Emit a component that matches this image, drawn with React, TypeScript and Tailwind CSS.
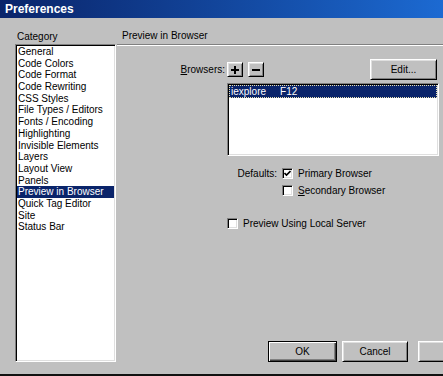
import type { ReactNode } from 'react';

const categories = [
  'General',
  'Code Colors',
  'Code Format',
  'Code Rewriting',
  'CSS Styles',
  'File Types / Editors',
  'Fonts / Encoding',
  'Highlighting',
  'Invisible Elements',
  'Layers',
  'Layout View',
  'Panels',
  'Preview in Browser',
  'Quick Tag Editor',
  'Site',
  'Status Bar',
];

const Checkbox = ({ checked = false }: { checked?: boolean }) => (
  <div className="w-[11px] h-[11px] shrink-0 bg-white border border-t-[#808080] border-l-[#808080] border-r-white border-b-white shadow-[inset_1px_1px_0_#000,inset_-1px_-1px_0_#dfdfdf] flex items-center justify-center">
    {checked && (
      <svg width="7" height="7" viewBox="0 0 7 7">
        <path d="M0.5 3 L2.5 5 L6.5 1" stroke="#000" strokeWidth="1.6" fill="none" />
      </svg>
    )}
  </div>
);

const Button = ({ children, className = '', isDefault = false }: { children?: ReactNode; className?: string; isDefault?: boolean }) => (
  <div
    className={`shrink-0 bg-[#c0c0c0] flex items-center justify-center ${
      isDefault
        ? 'border border-black shadow-[inset_1px_1px_0_#fff,inset_-1px_-1px_0_#404040,inset_-2px_-2px_0_#808080]'
        : 'border border-t-white border-l-white border-r-black border-b-black shadow-[inset_1px_1px_0_#dfdfdf,inset_-1px_-1px_0_#808080]'
    } ${className}`}
  >
    {children}
  </div>
);

export default function App() {
  return (
    <div className="w-[443px] h-[376px] overflow-hidden bg-[#c0c0c0] flex flex-col text-[10px] text-black border-b-2 border-[#111] font-['Liberation_Sans',Arial,sans-serif]">
      {/* title bar */}
      <div className="h-[18px] shrink-0 flex items-center pl-[5px] bg-gradient-to-r from-[#0a246a] to-[#1c6ad2] text-white font-bold text-[12px]">
        Preferences
      </div>

      <div className="flex flex-1 pb-[12px] min-h-0">
        {/* category column */}
        <div className="ml-[15px] w-[101px] flex flex-col">
          <div className="mt-[12px] h-[13px] leading-[13px] pl-[2px]">Category</div>
          <div className="mt-[1px] flex-1 bg-white border border-t-[#808080] border-l-[#808080] border-r-white border-b-white shadow-[inset_1px_1px_0_#000,inset_-1px_-1px_0_#dfdfdf] pt-[1px] px-[1px]">
            {categories.map((c) => (
              <div
                key={c}
                className={`h-[11.7px] leading-[11.7px] pl-[1px] whitespace-nowrap ${
                  c === 'Preview in Browser' ? 'bg-[#0a246a] text-white' : ''
                }`}
              >
                {c}
              </div>
            ))}
          </div>
        </div>

        {/* settings panel */}
        <div className="ml-[1px] flex-1 flex flex-col min-w-0">
          <div className="h-[27px] shrink-0 flex items-end pb-[2px] pl-[5px] border-b border-[#808080] leading-[13px]">
            Preview in Browser
          </div>
          <div className="h-px bg-white shrink-0" />

          <div className="mt-[13px] h-[21px] flex items-center">
            <div className="w-[108px] text-right">
              <span className="underline">B</span>rowsers:
            </div>
            <Button className="ml-[2px] w-[16px] h-[15px]">
              <svg width="8" height="8" viewBox="0 0 8 8">
                <path d="M4 0 V8 M0 4 H8" stroke="#000" strokeWidth="2" />
              </svg>
            </Button>
            <Button className="ml-[5px] w-[16px] h-[15px]">
              <svg width="8" height="8" viewBox="0 0 8 8">
                <path d="M0 4 H8" stroke="#000" strokeWidth="2" />
              </svg>
            </Button>
            <Button className="ml-auto mr-[6px] w-[67px] h-[21px]">Edit...</Button>
          </div>

          <div className="mt-[3px] ml-[110px] w-[212px] h-[73px] bg-white border border-t-[#808080] border-l-[#808080] border-r-white border-b-white shadow-[inset_1px_1px_0_#000,inset_-1px_-1px_0_#dfdfdf] p-[1px]">
            <div className="h-[13px] leading-[12px] bg-[#0a246a] text-white pl-[1px] border border-dotted border-[#e8e0b0]">
              iexplore<span className="ml-[14px]">F12</span>
            </div>
          </div>

          <div className="mt-[12px] h-[11px] flex items-center leading-[11px]">
            <div className="w-[160px] text-right">Defaults:</div>
            <div className="ml-[5px]">
              <Checkbox checked />
            </div>
            <div className="ml-[5px]">Primary Browser</div>
          </div>

          <div className="mt-[6px] h-[11px] flex items-center leading-[11px] pl-[165px]">
            <Checkbox />
            <div className="ml-[5px]">
              <span className="underline">S</span>econdary Browser
            </div>
          </div>

          <div className="mt-[22px] h-[11px] flex items-center leading-[11px] pl-[110px]">
            <Checkbox />
            <div className="ml-[5px]">Preview Using Local Server</div>
          </div>

          <div className="mt-auto h-[21px] flex pl-[151px]">
            <Button isDefault className="w-[69px] h-[21px]">OK</Button>
            <Button className="ml-[5px] w-[66px] h-[21px]">Cancel</Button>
            <Button className="ml-[10px] w-[69px] h-[21px]" />
          </div>
        </div>
      </div>
    </div>
  );
}
